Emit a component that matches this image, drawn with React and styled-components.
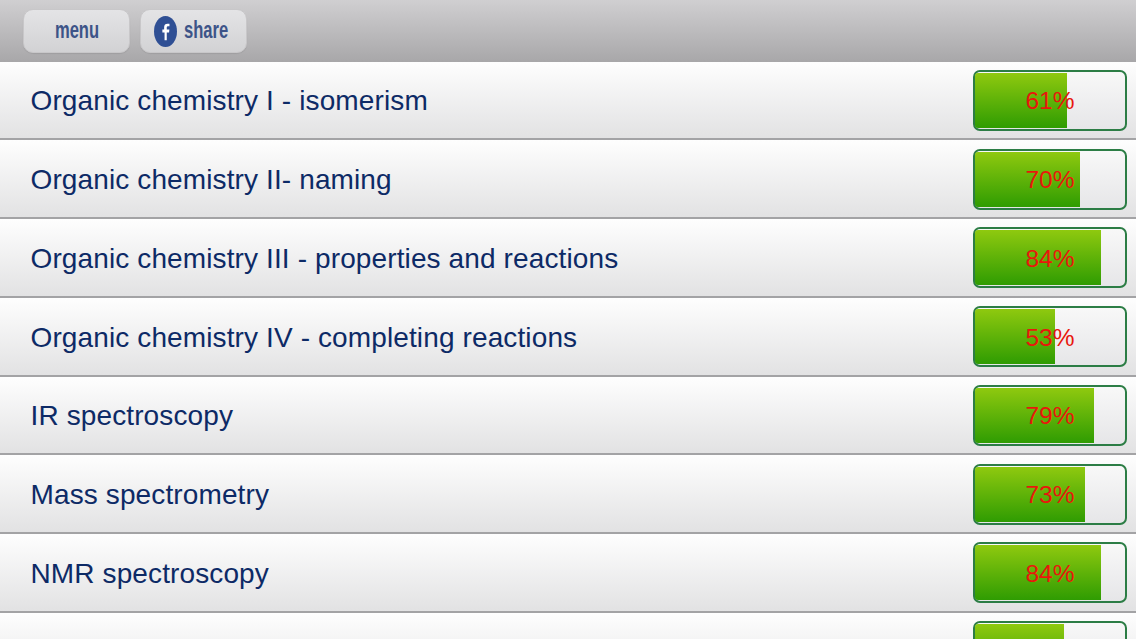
import React from 'react';
import styled, { createGlobalStyle } from 'styled-components';

const topics = [
    { label: 'Organic chemistry I - isomerism', score: 61 },
    { label: 'Organic chemistry II- naming', score: 70 },
    { label: 'Organic chemistry III - properties and reactions', score: 84 },
    { label: 'Organic chemistry IV - completing reactions', score: 53 },
    { label: 'IR spectroscopy', score: 79 },
    { label: 'Mass spectrometry', score: 73 },
    { label: 'NMR spectroscopy', score: 84 },
    { label: '', score: 59 },
];

const App = () => {
    return (
        <Page>
            <GlobalStyle />
            <Topbar>
                <BarButton><ButtonLabel>menu</ButtonLabel></BarButton>
                <BarButton>
                    <FacebookBadge>
                        <svg viewBox="0 0 22 32" width="23" height="31" preserveAspectRatio="none">
                            <ellipse cx="11" cy="16" rx="11" ry="16" fill="#2f4f94" />
                            <path d="M12.200 25v-8h2.200l.3-3h-2.500v-1.800c0-.9.3-1.500 1.400-1.500h1.200V8c-.3 0-1-.1-1.900-.1-2 0-3.200 1.200-3.200 3.500V14H8v3h2.100v8z" fill="#fff" />
                        </svg>
                    </FacebookBadge>
                    <ButtonLabel>share</ButtonLabel>
                </BarButton>
            </Topbar>
            <TopicList>
                {topics.map((topic, i) => (
                    <TopicRow key={i}>
                        <TopicLabel>{topic.label}</TopicLabel>
                        <Progress>
                            <ProgressFill style={{ width: `${topic.score}%` }} />
                            {topic.label && <ProgressText>{topic.score}%</ProgressText>}
                        </Progress>
                    </TopicRow>
                ))}
            </TopicList>
        </Page>
    )
}

export default App;

const GlobalStyle = createGlobalStyle`
    html, body {
        margin: 0;
        height: 100%;
        overflow: hidden;
        background: #fff;
    }
`;

const Page = styled.div`
    width: 1136px;
    height: 639px;
    overflow: hidden;
    font-family: "Liberation Sans", Arial, sans-serif;
`;

const Topbar = styled.header`
    box-sizing: border-box;
    display: flex;
    align-items: flex-start;
    gap: 10px;
    height: 61.5px;
    padding: 9px 0 0 23px;
    background: linear-gradient(#d0cfd1, #a8a7a9);
`;

const BarButton = styled.button`
    box-sizing: border-box;
    display: flex;
    align-items: center;
    justify-content: center;
    gap: 7px;
    width: 107px;
    height: 44px;
    padding: 0;
    border: 1px solid #c8c7c9;
    border-radius: 10px;
    background: linear-gradient(#e4e4e6, #d2d2d4);
    box-shadow: 0 1px 1px rgba(0, 0, 0, .08);
`;

const ButtonLabel = styled.span`
    margin: -2px -11px 0 -10px;
    color: #3d5488;
    font: bold 24px "Liberation Sans", Arial, sans-serif;
    transform: scaleX(.69);
`;

const FacebookBadge = styled.span`
    display: flex;
    margin-left: -5px;
`;

const TopicList = styled.main`
    display: flex;
    flex-direction: column;
`;

const TopicRow = styled.div`
    box-sizing: border-box;
    flex: none;
    display: flex;
    align-items: center;
    justify-content: space-between;
    height: 78.75px;
    padding: 1px 9px 0 30.5px;
    border-bottom: 2px solid #a3a3a5;
    background: linear-gradient(#fefefe, #e2e2e3);
`;

const TopicLabel = styled.span`
    padding-top: 2px;
    color: #0d2a66;
    font-size: 28px;
    letter-spacing: .12px;
`;

const Progress = styled.div`
    box-sizing: border-box;
    position: relative;
    width: 154px;
    height: 61px;
    padding: 1px 0;
    border: 2px solid #2c7d45;
    border-radius: 7px;
    background: linear-gradient(#f8f8f8, #e6e6e8);
`;

const ProgressFill = styled.div`
    height: 100%;
    border-radius: 3px 0 0 3px;
    background: linear-gradient(#8fc90f, #2f9c02);
`;

const ProgressText = styled.span`
    position: absolute;
    inset: 2px 0 0;
    display: flex;
    align-items: center;
    justify-content: center;
    color: #e8170c;
    font-size: 24.5px;
`;
